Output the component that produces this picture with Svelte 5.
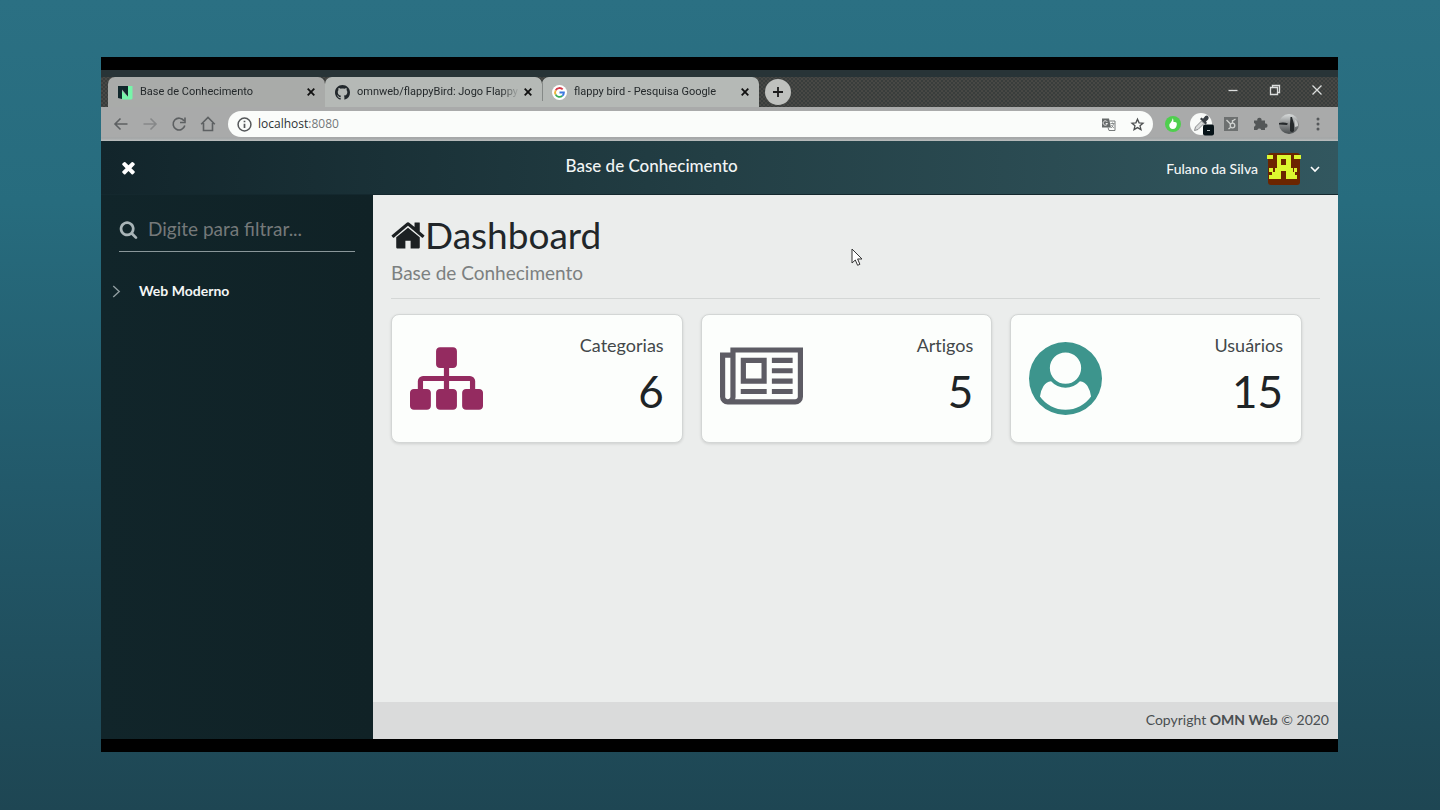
<script>
  const tabs = [
    { title: 'Base de Conhecimento', icon: 'neo', active: true },
    { title: 'omnweb/flappyBird: Jogo Flappy', icon: 'github', active: false },
    { title: 'flappy bird - Pesquisa Google', icon: 'google', active: false }
  ];

  const stats = [
    {
      title: 'Categorias',
      value: 6,
      color: '#942b60',
      box: '0 0 1792 1792',
      wide: false,
      path: 'M1792 1248v320q0 40-28 68t-68 28h-320q-40 0-68-28t-28-68v-320q0-40 28-68t68-28h96v-192h-512v192h96q40 0 68 28t28 68v320q0 40-28 68t-68 28h-320q-40 0-68-28t-28-68v-320q0-40 28-68t68-28h96v-192h-512v192h96q40 0 68 28t28 68v320q0 40-28 68t-68 28h-320q-40 0-68-28t-28-68v-320q0-40 28-68t68-28h96v-192q0-52 38-90t90-38h512v-192h-96q-40 0-68-28t-28-68v-320q0-40 28-68t68-28h320q40 0 68 28t28 68v320q0 40-28 68t-68 28h-96v192h512q52 0 90 38t38 90v192h96q40 0 68 28t28 68z'
    },
    {
      title: 'Artigos',
      value: 5,
      color: '#5d5c64',
      box: '0 0 2048 1792',
      wide: true,
      path: 'M1024 512h-384v384h384v-384zm128 640v128h-640v-128h640zm0-768v640h-640v-640h640zm640 768v128h-512v-128h512zm0-256v128h-512v-128h512zm0-256v128h-512v-128h512zm0-256v128h-512v-128h512zm-1536 960v-960h-128v960q0 26 19 45t45 19 45-19 19-45zm1664 0v-1088h-1536v1088q0 33-11 64h1483q26 0 45-19t19-45zm128-1216v1216q0 80-56 136t-136 56h-1664q-80 0-136-56t-56-136v-1088h256v-128h1792z'
    },
    {
      title: 'Usuários',
      value: 15,
      color: '#3d958d',
      box: '0 0 1792 1792',
      wide: false,
      path: 'M1523 1339q-22-155-87.5-257.5t-184.5-118.5q-67 74-159.5 115.5t-195.5 41.5-195.5-41.5-159.5-115.5q-119 16-184.5 118.5t-87.5 257.5q106 150 271 237.5t356 87.5 356-87.5 271-237.5zm-243-699q0-159-112.5-271.5t-271.5-112.5-271.5 112.5-112.5 271.5 112.5 271.5 271.5 112.5 271.5-112.5 112.5-271.5zm512 256q0 182-71 347.5t-190.5 286-285.5 191.5-349 71q-182 0-348-71t-286-191-191-286-71-348 71-348 191-286 286-191 348-71 348 71 286 191 191 286 71 348z'
    }
  ];

  let filter = $state('');
</script>

<div class="stage">
  <div class="window">
    <div class="tabstrip">
      {#each tabs as tab}
        <div class="tab" class:active={tab.active}>
          {#if tab.icon === 'neo'}
            <svg class="favicon" viewBox="0 0 15 15" aria-hidden="true">
              <path d="M10 1h4.500v12.500l-1 1H4V6l6 6z" fill="#76f5a9" />
              <path d="M0 1h10v10.500L4 4.500V14L0 13z" fill="#10272b" />
            </svg>
          {:else if tab.icon === 'github'}
            <svg class="favicon" viewBox="0 0 16 16" aria-hidden="true">
              <path fill="#22282c" d="M8 0C3.580 0 0 3.580 0 8c0 3.540 2.290 6.530 5.470 7.590.4.070.55-.17.55-.38 0-.19-.01-.82-.01-1.490-2.010.37-2.530-.49-2.690-.94-.09-.23-.48-.94-.82-1.130-.28-.15-.68-.52-.01-.53.63-.01 1.080.58 1.230.82.72 1.210 1.870.87 2.330.66.07-.52.28-.87.51-1.070-1.780-.2-3.640-.89-3.640-3.950 0-.87.31-1.590.82-2.150-.08-.2-.36-1.020.08-2.120 0 0 .67-.21 2.200.82.64-.18 1.320-.27 2-.27s1.360.09 2 .27c1.530-1.040 2.200-.82 2.200-.82.44 1.100.16 1.920.08 2.120.51.56.82 1.270.82 2.150 0 3.070-1.870 3.750-3.650 3.950.29.25.54.73.54 1.480 0 1.070-.01 1.930-.01 2.200 0 .21.15.46.55.38A8.010 8.010 0 0 0 16 8c0-4.420-3.580-8-8-8z" />
            </svg>
          {:else}
            <svg class="favicon" viewBox="0 0 16 16" aria-hidden="true">
              <circle cx="8" cy="8" r="8" fill="#fff" />
              <g fill="none" stroke-width="2">
                <path d="M3.900 5.700A4.700 4.700 0 0 1 11.400 4.700" stroke="#d63c4a" />
                <path d="M3.900 5.700A4.700 4.700 0 0 0 3.900 10.300" stroke="#efb63c" />
                <path d="M3.900 10.300A4.700 4.700 0 0 0 11 11.600" stroke="#38ad58" />
                <path d="M8 8h4.700A4.700 4.700 0 0 1 11 11.600" stroke="#3d7be0" />
              </g>
            </svg>
          {/if}
          <button class="tab-title">{tab.title}</button>
          <button class="tab-close" aria-label="Fechar guia">
            <svg viewBox="0 0 8 8"><path d="M.7.7l6.600 6.600M7.300.7L.7 7.300" stroke="#111" stroke-width="1.800" /></svg>
          </button>
        </div>
      {/each}
      <button class="new-tab" aria-label="Nova guia">
        <svg viewBox="0 0 12 12"><path d="M6 1v10M1 6h10" stroke="#1c1c1c" stroke-width="1.800" /></svg>
      </button>
      <div class="win-controls">
        <button aria-label="Minimizar"><svg viewBox="0 0 12 12"><path d="M1.500 6.500h9" /></svg></button>
        <button aria-label="Restaurar"><svg viewBox="0 0 12 12"><path d="M1.500 3.500h7v7h-7zM3.500 3.500v-2h7v7h-2" /></svg></button>
        <button aria-label="Fechar"><svg viewBox="0 0 12 12"><path d="M1.500 1.500l9 9M10.500 1.500l-9 9" /></svg></button>
      </div>
    </div>

    <div class="toolbar">
      <div class="nav">
        <button aria-label="Voltar"><svg viewBox="0 0 16 16"><path d="M14.500 8H2.500M7.500 2.500L2 8l5.500 5.500" /></svg></button>
        <button aria-label="Avançar" class="off"><svg viewBox="0 0 16 16"><path d="M1.500 8h12M8.500 2.500L14 8l-5.500 5.500" /></svg></button>
        <button aria-label="Recarregar"><svg viewBox="0 0 16 16"><path d="M13 4.800A5.900 5.900 0 1 0 13.800 9.500M14 1.500v5H9" /></svg></button>
        <button aria-label="Página inicial"><svg viewBox="0 0 16 16"><path d="M1.200 8.300L8 1.500l6.800 6.800M3.500 7v7.500h9V7" /></svg></button>
      </div>
      <div class="address">
        <svg class="info" viewBox="0 0 14 14" aria-hidden="true">
          <circle cx="7" cy="7" r="6" fill="none" stroke="#55585a" stroke-width="1.400" />
          <path d="M7 6.200v4M7 3.500v1.500" stroke="#55585a" stroke-width="1.600" />
        </svg>
        <span class="url">localhost<span>:8080</span></span>
        <button aria-label="Traduzir">
          <svg viewBox="0 0 15 14">
            <path d="M1 1h7l2 9H1z" fill="#666a6a" />
            <path d="M8.500 3.500H14V13H8l-1-3" fill="none" stroke="#777b7b" />
            <path d="M6.200 4.300A2.200 2.200 0 1 0 6.500 6H4.700" fill="none" stroke="#eee" />
            <path d="M9.500 6h4M11.500 5v1M12.700 6q-.7 3-2.700 4.500M10.300 7.500l2.500 3" fill="none" stroke="#777b7b" stroke-width=".8" />
          </svg>
        </button>
        <button aria-label="Favoritar">
          <svg viewBox="0 0 16 16"><path d="M8 2.300l1.700 3.900 4.200.4-3.200 2.800 1 4.100L8 11.300l-3.700 2.200 1-4.100-3.200-2.800 4.200-.4z" fill="none" stroke="#4c4f50" stroke-width="1.400" /></svg>
        </button>
      </div>
      <div class="extensions">
        <button aria-label="Extensão verde">
          <svg viewBox="0 0 24 24"><circle cx="12" cy="12" r="8" fill="#4fcf4e" /><path d="M11.500 6.500c1 0 .8 2 1 3.500 3-.5 3.500.8 3.300 2.500-.2 2.500-1.500 4.500-4 4.500-2.200 0-3.500-1.500-3.500-3.700 0-2 3-3.500 3.200-6.800z" fill="#fff" /></svg>
        </button>
        <button aria-label="Conta-gotas">
          <svg viewBox="0 0 24 24">
            <circle cx="11" cy="12" r="11" fill="#f8faf8" />
            <path d="M4.500 18.500l1-3.500 6-6 2.500 2.500-6 6z" fill="#d8dada" stroke="#8a8d8e" />
            <path d="M10 7l1.500-1.500L13 6.700 15.300 4q2-1 3 .5t-.2 3L16 9.500l1 1.500-1.500 1.500z" fill="#3b4146" />
            <rect x="13" y="12.500" width="11" height="11" rx="2" fill="#071318" />
            <path d="M17 18.500h3" stroke="#b7bfc0" />
          </svg>
        </button>
        <button aria-label="HubSpot">
          <svg viewBox="0 0 24 24"><rect x="5" y="5" width="14" height="14" fill="#6d7070" /><g fill="none" stroke="#d0d2d0" stroke-width="1.300"><circle cx="13.500" cy="13.500" r="2.300" /><path d="M7.500 8l4 4M13.500 11V8M11.500 15.500L9.500 17M13.500 9l3-2" /></g></svg>
        </button>
        <button aria-label="Extensões">
          <svg viewBox="0 0 24 24"><path d="M6 8.500h3.300a2.200 2.200 0 1 1 4.200 0h3.500v3.100a2.100 2.100 0 1 1 0 4.100v2.300h-3.700a2.100 2.100 0 0 0-4 0H6v-3.200a2 2 0 0 0 0-3.900z" fill="#535657" /></svg>
        </button>
        <button aria-label="Perfil">
          <svg viewBox="0 0 24 24">
            <defs><linearGradient id="sky" x1="0" y1="0" x2="0" y2="1"><stop offset="0" stop-color="#d9dcdc" /><stop offset=".5" stop-color="#898c8d" /><stop offset="1" stop-color="#4a4e50" /></linearGradient></defs>
            <circle cx="12" cy="12" r="10" fill="url(#sky)" />
            <path d="M2 11q5-1 9 .5l-1 1.500-8-.5zM13.500 5h1.500l2 7v7q-2 2-4 0v-7z" fill="#25292b" />
            <path d="M17.500 7q4 3 3.500 7l-3 1z" fill="#c9cccc" />
          </svg>
        </button>
        <button aria-label="Menu">
          <svg viewBox="0 0 24 24"><g fill="#55585a"><circle cx="12" cy="7" r="1.500" /><circle cx="12" cy="12" r="1.500" /><circle cx="12" cy="17" r="1.500" /></g></svg>
        </button>
      </div>
    </div>

    <div class="app">
      <header>
        <button class="toggle" aria-label="Alternar menu">
          <svg viewBox="0 0 1792 1792"><path fill="#fff" d="M1490 1322q0 40-28 68l-136 136q-28 28-68 28t-68-28l-294-294-294 294q-28 28-68 28t-68-28l-136-136q-28-28-28-68t28-68l294-294-294-294q-28-28-28-68t28-68l136-136q28-28 68-28t68 28l294 294 294-294q28-28 68-28t68 28l136 136q28 28 28 68t-28 68l-294 294 294 294q28 28 28 68z" /></svg>
        </button>
        <h1>Base de Conhecimento</h1>
        <button class="user">
          <span>Fulano da Silva</span>
          <svg class="avatar" viewBox="0 0 34 34" aria-hidden="true">
            <rect x="1" y="1" width="32" height="32" rx="3" fill="#6b2500" />
            <path fill="#dcf72f" d="M0 3h6v4H0zM27 3h7v4h-7z" />
            <path fill="#dcf72f" fill-rule="evenodd" d="M10 3h14v13h2v4h1v-4h3v4h-2v3h2v4H19v-8h-5v8H2v-4h3v-3H2v-4h4v4h2v-4h2zM14 7v6h5V7z" />
          </svg>
          <svg class="caret" viewBox="0 0 10 10" aria-hidden="true"><path d="M1 3l4 4 4-4" fill="none" stroke="#fff" stroke-width="1.600" /></svg>
        </button>
      </header>

      <aside>
        <label class="search">
          <svg viewBox="0 0 1792 1792" aria-hidden="true"><path fill="#a9b5b8" d="M1216 832q0-185-131.500-316.500t-316.500-131.500-316.500 131.500-131.500 316.500 131.500 316.500 316.500 131.500 316.500-131.500 131.500-316.500zm512 832q0 52-38 90t-90 38q-54 0-90-38l-343-342q-179 124-399 124-143 0-273.500-55.500t-225-150-150-225-55.500-273.500 55.500-273.500 150-225 225-150 273.500-55.500 273.500 55.500 225 150 150 225 55.500 273.500q0 220-124 399l343 343q37 37 37 90z" /></svg>
          <input type="text" placeholder="Digite para filtrar..." aria-label="Filtrar" bind:value={filter} />
        </label>
        <ul>
          <li>
            <svg viewBox="0 0 8 12" aria-hidden="true"><path d="M1 1l5.500 5L1 11" fill="none" stroke="#8f9c9f" stroke-width="1.300" /></svg>
            <a href="#web-moderno">Web Moderno</a>
          </li>
        </ul>
      </aside>

      <main>
        <h2>
          <svg viewBox="0 0 1664 1792" aria-hidden="true"><path transform="translate(-64)" fill="#1c2022" d="M1472 992v480q0 26-19 45t-45 19h-384v-384h-256v384h-384q-26 0-45-19t-19-45v-480q0-1 .5-3t.5-3l575-474 575 474q1 2 1 6zm223-69l-62 74q-8 9-21 11h-3q-13 0-21-7l-692-577-692 577q-12 8-24 7-13-2-21-11l-62-74q-8-10-7-23.500t11-21.500l719-599q32-26 76-26t76 26l244 204v-195q0-14 9-23t23-9h192q14 0 23 9t9 23v408l219 182q10 8 11 21.500t-7 23.500z" /></svg>Dashboard
        </h2>
        <p class="subtitle">Base de Conhecimento</p>
        <hr />
        <div class="stats">
          {#each stats as stat}
            <section class="stat">
              <svg class:wide={stat.wide} viewBox={stat.box} aria-hidden="true"><path fill={stat.color} d={stat.path} /></svg>
              <div class="info-block">
                <span class="name">{stat.title}</span>
                <span class="value">{stat.value}</span>
              </div>
            </section>
          {/each}
        </div>
      </main>

      <footer>
        <span>Copyright <strong>OMN Web</strong> © 2020</span>
      </footer>
    </div>

    <svg class="pointer" viewBox="0 0 12 19" aria-hidden="true"><path d="M1 1v14l3.300-3 2.300 5.300 2.300-1-2.300-5.300H11z" fill="#fff" stroke="#333" /></svg>
  </div>
</div>

<style>
  :global(body) {
    margin: 0;
  }
  .stage {
    box-sizing: border-box;
    min-height: 100vh;
    padding: 57px 102px 58px 101px;
    display: flex;
    background: linear-gradient(#2b7083, #276c7e 25%, #22596a 60%, #1e4653);
    font-family: Lato, sans-serif;
    color: #212629;
  }
  .window {
    position: relative;
    flex: 1;
    min-width: 0;
    display: flex;
    flex-direction: column;
    padding: 13px 0;
    background: #000;
  }
  button {
    padding: 0;
    border: 0;
    background: none;
    font: inherit;
    color: inherit;
    cursor: pointer;
  }
  svg {
    display: block;
    flex: none;
  }

  .tabstrip {
    display: flex;
    height: 37px;
    box-sizing: border-box;
    padding: 7px 0 0 7px;
    background:
      linear-gradient(#283437 7px, transparent 7px),
      repeating-conic-gradient(#393d3c 0 25%, #484845 0 50%) 0 0 / 4px 4px;
  }
  .tab {
    position: relative;
    box-sizing: border-box;
    width: 217px;
    min-width: 0;
    display: flex;
    align-items: center;
    padding: 0 10px;
    border-radius: 7px 7px 0 0;
    background: #b5b9b6;
    font: 11px/16px Roboto, sans-serif;
    color: #24292b;
  }
  .tab.active {
    background: #a9aba9;
  }
  .tab + .tab + .tab::before {
    content: '';
    position: absolute;
    left: 0;
    top: 6px;
    bottom: 6px;
    width: 1px;
    background: #858987;
  }
  .favicon {
    width: 15px;
    height: 15px;
    margin-right: 7px;
  }
  .tab-title {
    flex: 1;
    min-width: 0;
    overflow: hidden;
    white-space: nowrap;
    text-align: left;
    margin-right: 4px;
    mask-image: linear-gradient(90deg, #000 88%, transparent);
  }
  .tab-close svg {
    width: 8px;
    height: 8px;
  }
  .new-tab {
    align-self: center;
    width: 26px;
    height: 26px;
    margin-left: 6px;
    display: grid;
    place-items: center;
    border-radius: 50%;
    background: #bfc1be;
  }
  .new-tab svg {
    width: 12px;
    height: 12px;
  }
  .win-controls {
    margin-left: auto;
    display: flex;
    align-items: center;
    padding-bottom: 4px;
  }
  .win-controls button {
    width: 42px;
    height: 24px;
    display: grid;
    place-items: center;
  }
  .win-controls svg {
    width: 12px;
    height: 12px;
    fill: none;
    stroke: #dcdedd;
    stroke-width: 1.3;
  }

  .toolbar {
    display: flex;
    align-items: center;
    height: 34px;
    box-sizing: border-box;
    padding: 0 8px 0 5px;
    background: linear-gradient(#a9aaaa 30px, #a2a5a6 31px, #bbbebe);
  }
  .nav {
    display: flex;
  }
  .nav button {
    width: 29px;
    height: 24px;
    display: grid;
    place-items: center;
  }
  .nav svg {
    width: 16px;
    height: 16px;
    fill: none;
    stroke: #5d6062;
    stroke-width: 1.6;
  }
  .nav .off {
    opacity: 0.45;
  }
  .address {
    flex: 1;
    min-width: 0;
    height: 26px;
    margin: 0 8px 0 6px;
    padding: 0 8px 0 9px;
    display: flex;
    align-items: center;
    gap: 14px;
    border-radius: 13px;
    box-sizing: border-box;
    background: #fafcfa;
    font: 12px/16px "Open Sans", sans-serif;
    color: #2e3335;
  }
  .address svg {
    width: 15px;
    height: 15px;
  }
  .info {
    margin-right: -8px;
  }
  .url {
    flex: 1;
  }
  .url span {
    color: #74787a;
  }
  .extensions {
    display: flex;
    gap: 5px;
  }
  .extensions svg {
    width: 24px;
    height: 24px;
  }

  .app {
    flex: 1;
    display: grid;
    grid-template-columns: 272px minmax(0, 1fr);
    grid-template-rows: 54px 1fr 37px;
  }
  header {
    grid-column: 1 / 3;
    display: flex;
    align-items: stretch;
    border-bottom: 1px solid #14282e;
    box-sizing: border-box;
    background: linear-gradient(90deg, #12252b, #233f45 50%, #32575f);
    color: #f2f5f5;
  }
  .toggle {
    width: 54px;
    display: grid;
    place-items: center;
  }
  .toggle svg {
    width: 19px;
    height: 19px;
  }
  h1 {
    flex: 1;
    margin: 0;
    padding-bottom: 4px;
    align-self: center;
    text-align: center;
    font-size: 17px;
    line-height: 24px;
    font-weight: 500;
  }
  .user {
    display: flex;
    align-items: center;
    gap: 9px;
    padding: 2px 18px 0;
    font-size: 14px;
    font-weight: 500;
  }
  .avatar {
    width: 34px;
    height: 34px;
  }
  .caret {
    width: 10px;
    height: 10px;
  }

  aside {
    grid-row: 2 / 4;
    padding: 18px 18px 0;
    background: linear-gradient(90deg, #11252a, #102226);
  }
  .search {
    display: flex;
    align-items: center;
    height: 32px;
    padding-bottom: 6px;
    border-bottom: 1px solid #8a979a;
  }
  .search svg {
    width: 19px;
    height: 19px;
    margin-right: 8px;
  }
  .search input {
    flex: 1;
    min-width: 0;
    padding: 0 2px;
    border: 0;
    outline: 0;
    background: none;
    font: 19px/32px Lato, sans-serif;
    color: #c9d2d4;
  }
  .search input::placeholder {
    color: #75797a;
    opacity: 1;
  }
  ul {
    list-style: none;
    margin: 28px 0 0;
    padding: 0;
  }
  li {
    display: flex;
    align-items: center;
    gap: 18px;
    margin-left: -7px;
    line-height: 22px;
  }
  li svg {
    width: 9px;
    height: 13px;
  }
  li a {
    font-size: 14px;
    font-weight: 700;
    color: #f4f6f6;
    text-decoration: none;
  }

  main {
    padding: 18px;
    background: #ebedec;
  }
  h2 {
    display: flex;
    align-items: center;
    margin: 0;
    font-size: 37px;
    line-height: 44px;
    font-weight: 400;
  }
  h2 svg {
    width: 34px;
    height: 37px;
  }
  .subtitle {
    margin: 4px 0 0;
    font-size: 19px;
    line-height: 24px;
    color: #7c8080;
  }
  hr {
    margin: 13px 0 15px;
    border: 0;
    border-top: 1px solid #d4d7d6;
  }
  .stats {
    display: grid;
    grid-template-columns: repeat(3, minmax(0, 1fr));
    gap: 18px;
    padding-right: 18px;
  }
  .stat {
    display: flex;
    align-items: center;
    justify-content: space-between;
    box-sizing: border-box;
    min-height: 129px;
    padding: 16px 18px;
    border: 1px solid #d3d6d5;
    border-radius: 8px;
    background: #fcfefc;
    box-shadow: 0 1px 3px rgba(0, 0, 0, 0.12);
  }
  .stat svg {
    width: 73px;
    height: 73px;
  }
  .stat svg.wide {
    width: 83px;
  }
  .info-block {
    display: flex;
    flex-direction: column;
    align-items: flex-end;
    padding-bottom: 3px;
  }
  .name {
    font-size: 18px;
    line-height: 28px;
    color: #43484a;
    font-variant-ligatures: none;
  }
  .value {
    font-size: 44px;
    line-height: 64px;
    color: #1e2426;
  }

  footer {
    display: flex;
    align-items: center;
    justify-content: flex-end;
    padding: 0 9px 2px 0;
    background: #dadbdb;
    font-size: 14px;
    color: #4a4f51;
  }

  .pointer {
    position: absolute;
    left: 750px;
    top: 191px;
    width: 12px;
    height: 19px;
  }
</style>
